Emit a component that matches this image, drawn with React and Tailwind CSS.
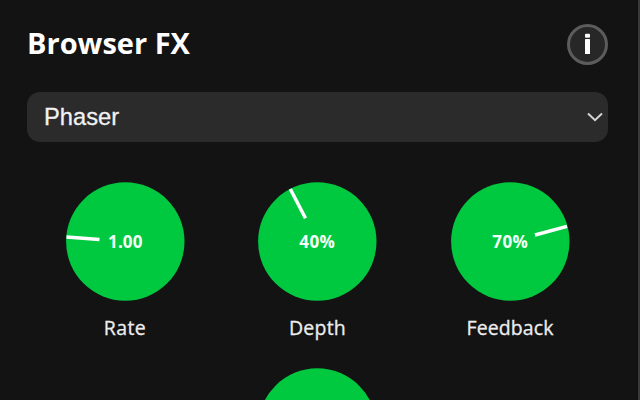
import React from "react";

const knobs = [
  { label: "Rate", value: "1.00", line: [0.5, 55, 33.5, 57.5], valueClass: "tracking-[0.1px]", labelClass: "tracking-[0.4px]" },
  { label: "Depth", value: "40%", line: [32.3, 7, 47.5, 36.3], valueClass: "tracking-[0.4px]", labelClass: "tracking-[0.2px]" },
  { label: "Feedback", value: "70%", line: [84, 53, 116, 44.4], valueClass: "tracking-[0.4px]", labelClass: "tracking-[0.1px]" },
];

function Knob({ label, value, line, valueClass, labelClass }) {
  return (
    <div className="flex w-[192.5px] flex-col items-center">
      <svg className="block h-[119px] w-[119px]" viewBox="0 0 119 119">
        <circle cx="59.3" cy="59.5" r="59.2" fill="#00c940" />
        {line && (
          <line x1={line[0]} y1={line[1]} x2={line[2]} y2={line[3]} stroke="#fff" strokeWidth="3.5" />
        )}
        {value && (
          <text x="59.3" y="65.5" textAnchor="middle" fill="#f4fff6" className={`text-[17px] font-bold ${valueClass}`}>
            {value}
          </text>
        )}
      </svg>
      <div className={`mt-[13px] h-[27px] text-[19.5px] leading-[27px] font-medium text-[#ededed] [-webkit-text-stroke:0.3px_#ededed] ${labelClass}`}>{label}</div>
    </div>
  );
}

export default function App() {
  return (
    <main className="flex h-[400px] w-[640px] flex-col overflow-hidden border-r-2 border-[#3a3938] bg-[#131313] pr-[30px] pl-[27px] font-['Open_Sans','Noto_Sans',sans-serif] text-white">
      <header className="mt-[24px] flex h-[41px] shrink-0 items-center justify-between">
        <h1 className="pb-[3px] text-[29px] leading-[38px] font-bold tracking-[0px]">Browser FX</h1>
        <button aria-label="Information" className="flex h-[41px] w-[41px] items-center justify-center rounded-full border-[3px] border-[#5c5c5c] bg-[#272727]">
          <svg className="mb-[2px] h-[22px] w-[8px]" viewBox="0 0 8 22" fill="#fff">
            <rect x="1" y="0.7" width="5" height="4" rx="1" />
            <rect x="1" y="6" width="5" height="15" rx="0.5" />
          </svg>
        </button>
      </header>
      <div className="mt-[27px] flex h-[50px] shrink-0 items-center justify-between rounded-[13px] bg-[#2b2b2b] pr-[5px] pl-[17px]">
        <span className="pt-[2px] font-['Liberation_Sans',sans-serif] text-[23.7px] text-[#f1f1f1] [-webkit-text-stroke:0.3px_#f1f1f1]">Phaser</span>
        <svg className="h-[10px] w-[16px]" viewBox="0 0 16 10" fill="none" stroke="#d5d5d5" strokeWidth="2">
          <path d="M1 1.5 L8 8.2 L15 1.5" />
        </svg>
      </div>
      <section className="-mx-px mt-[40px] flex shrink-0 flex-wrap justify-center gap-y-[27px]">
        {knobs.map((knob) => (
          <Knob key={knob.label} {...knob} />
        ))}
        <Knob label="" />
      </section>
    </main>
  );
}
